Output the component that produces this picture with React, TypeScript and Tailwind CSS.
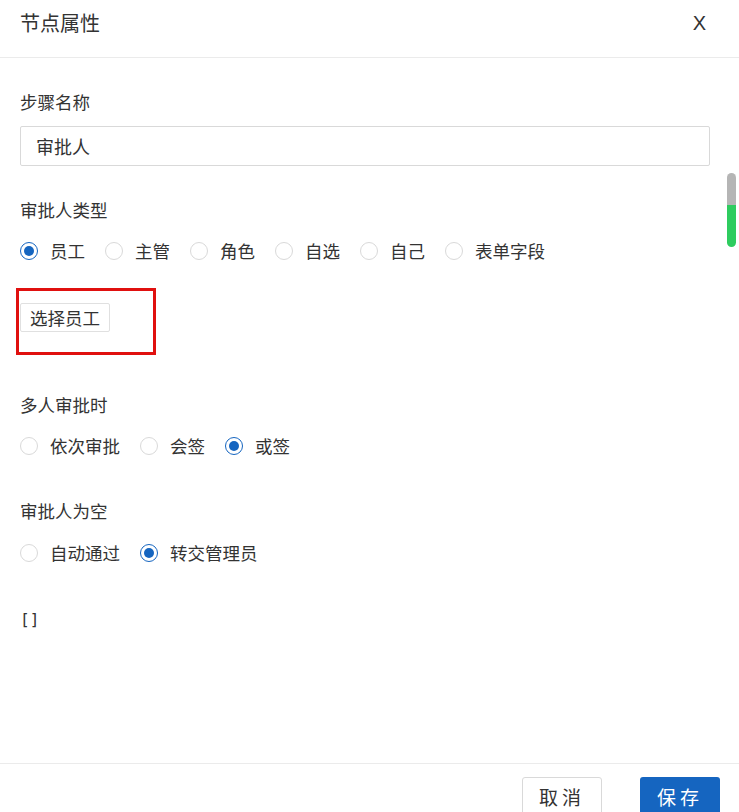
import { useState } from "react";

type Option = { value: string; label: string };

function RadioGroup({
	options,
	value,
	onChange,
}: {
	options: Option[];
	value: string;
	onChange: (v: string) => void;
}) {
	return (
		<div className="flex items-center h-6">
			{options.map((opt) => {
				const checked = opt.value === value;
				return (
					<label
						key={opt.value}
						className="flex items-center mr-5 cursor-pointer"
						onClick={() => onChange(opt.value)}
					>
						<span
							className={
								checked
									? "w-[18px] h-[18px] rounded-full border border-[#1565c0] flex items-center justify-center"
									: "w-[18px] h-[18px] rounded-full border border-[#d9d9d9]"
							}
						>
							{checked && <span className="w-[10px] h-[10px] rounded-full bg-[#1565c0]" />}
						</span>
						<span className="ml-3 text-[17.5px] leading-6 text-[#333]">{opt.label}</span>
					</label>
				);
			})}
		</div>
	);
}

export default function App() {
	const [name, setName] = useState("审批人");
	const [type, setType] = useState("employee");
	const [multi, setMulti] = useState("or");
	const [empty, setEmpty] = useState("admin");

	return (
		<div
			className="relative w-[739px] h-[812px] bg-white overflow-hidden text-[#333]"
			style={{ fontFamily: '"Noto Sans CJK SC", "Noto Sans", sans-serif' }}
		>
			{/* Header */}
			<div className="h-[58px] border-b border-[#ebebeb] px-5 pt-[10px] flex items-start justify-between">
				<h2 className="text-[20px] leading-[26px] font-normal">节点属性</h2>
				<button
					className="text-[20px] leading-[26px] mr-[13px] text-[#333]"
					style={{ fontFamily: '"Liberation Sans", sans-serif' }}
				>
					X
				</button>
			</div>

			{/* Body */}
			<div className="px-5 pt-[32px]">
				<div className="text-[17.5px] leading-6">步骤名称</div>
				<input
					value={name}
					onChange={(e) => setName(e.target.value)}
					className="mt-3 w-[690px] h-10 border border-[#d9d9d9] rounded-[2px] px-[15px] text-[18px] text-[#333] outline-none"
				/>

				<div className="mt-8 text-[17.5px] leading-6">审批人类型</div>
				<div className="mt-[17px]">
					<RadioGroup
						value={type}
						onChange={setType}
						options={[
							{ value: "employee", label: "员工" },
							{ value: "manager", label: "主管" },
							{ value: "role", label: "角色" },
							{ value: "choose", label: "自选" },
							{ value: "self", label: "自己" },
							{ value: "field", label: "表单字段" },
						]}
					/>
				</div>

				<div className="relative mt-10 h-[90px]">
					<button className="h-[29px] px-[9px] border border-[#e0e0e0] rounded-[2px] bg-white text-[17.5px] leading-[27px] text-[#333]">
						选择员工
					</button>
					{/* red highlight annotation */}
					<div className="absolute left-[-4px] top-[-15px] w-[140px] h-[67px] border-[3px] border-[#e0100f]" />
				</div>

				<div className="text-[17.5px] leading-6">多人审批时</div>
				<div className="mt-[17px]">
					<RadioGroup
						value={multi}
						onChange={setMulti}
						options={[
							{ value: "seq", label: "依次审批" },
							{ value: "and", label: "会签" },
							{ value: "or", label: "或签" },
						]}
					/>
				</div>

				<div className="mt-[41px] text-[17.5px] leading-6">审批人为空</div>
				<div className="mt-[18px]">
					<RadioGroup
						value={empty}
						onChange={setEmpty}
						options={[
							{ value: "pass", label: "自动通过" },
							{ value: "admin", label: "转交管理员" },
						]}
					/>
				</div>

				<div
					className="mt-[43px] text-[16px] leading-6"
					style={{ fontFamily: '"DejaVu Sans Mono", monospace' }}
				>
					[]
				</div>
			</div>

			{/* Scroll indicator */}
			<div className="absolute left-[727px] top-[173px] w-[9px] h-[74px] rounded-full overflow-hidden flex flex-col">
				<div className="h-[32px] bg-[#b5b5b5]" />
				<div className="flex-1 bg-[#2ecc5f]" />
			</div>

			{/* Footer */}
			<div className="absolute left-0 right-0 top-[763px] border-t border-[#ebebeb] pt-[13px] flex justify-end pr-[19px] gap-[38px]">
				<button className="w-20 h-[40px] border border-[#d9d9d9] rounded-[3px] bg-white text-[19px] leading-[38px] tracking-[4px] text-[#333]">
					取消
				</button>
				<button className="w-20 h-[40px] rounded-[3px] bg-[#1565c0] text-[19px] leading-[38px] tracking-[4px] text-white">
					保存
				</button>
			</div>
		</div>
	);
}
